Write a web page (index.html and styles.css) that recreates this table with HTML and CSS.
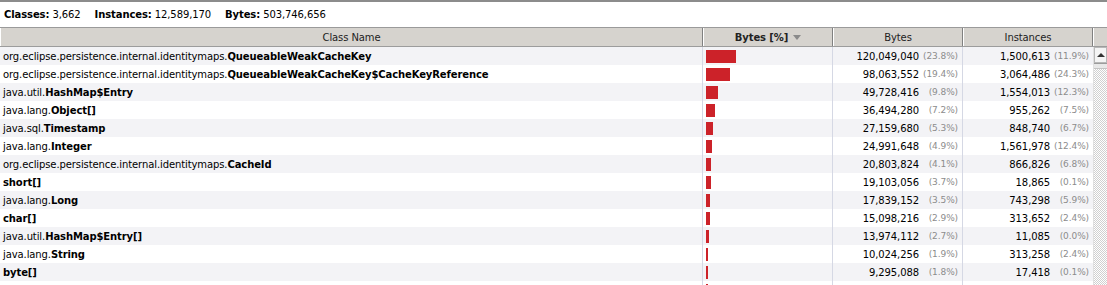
FILE: index.html
```html
<!DOCTYPE html>
<html>
<head>
<meta charset="utf-8">
<link rel="stylesheet" href="styles.css">
</head>
<body>
<div class="stats">
  <span class="stat"><b>Classes:</b> 3,662</span>
  <span class="stat"><b>Instances:</b> 12,589,170</span>
  <span class="stat"><b>Bytes:</b> 503,746,656</span>
</div>
<div class="table">
  <div class="header">
    <div class="hcell c-name">Class Name</div>
    <div class="hcell c-bar sorted"><b>Bytes [%]</b><span class="arrow"></span></div>
    <div class="hcell c-num">Bytes</div>
    <div class="hcell c-num">Instances</div>
    <div class="hcell c-corner"></div>
  </div>
  <div class="body">
    <div class="rows">
      <div class="row"><div class="cell c-name">org.eclipse.persistence.internal.identitymaps.<b>QueueableWeakCacheKey</b></div><div class="cell c-bar"><span class="bar" style="width:30px"></span></div><div class="cell c-num"><span class="n">120,049,040</span><span class="p">(23.8%)</span></div><div class="cell c-num"><span class="n">1,500,613</span><span class="p">(11.9%)</span></div></div>
      <div class="row"><div class="cell c-name">org.eclipse.persistence.internal.identitymaps.<b>QueueableWeakCacheKey$CacheKeyReference</b></div><div class="cell c-bar"><span class="bar" style="width:24px"></span></div><div class="cell c-num"><span class="n">98,063,552</span><span class="p">(19.4%)</span></div><div class="cell c-num"><span class="n">3,064,486</span><span class="p">(24.3%)</span></div></div>
      <div class="row"><div class="cell c-name">java.util.<b>HashMap$Entry</b></div><div class="cell c-bar"><span class="bar" style="width:12px"></span></div><div class="cell c-num"><span class="n">49,728,416</span><span class="p">(9.8%)</span></div><div class="cell c-num"><span class="n">1,554,013</span><span class="p">(12.3%)</span></div></div>
      <div class="row"><div class="cell c-name">java.lang.<b>Object[]</b></div><div class="cell c-bar"><span class="bar" style="width:9px"></span></div><div class="cell c-num"><span class="n">36,494,280</span><span class="p">(7.2%)</span></div><div class="cell c-num"><span class="n">955,262</span><span class="p">(7.5%)</span></div></div>
      <div class="row"><div class="cell c-name">java.sql.<b>Timestamp</b></div><div class="cell c-bar"><span class="bar" style="width:7px"></span></div><div class="cell c-num"><span class="n">27,159,680</span><span class="p">(5.3%)</span></div><div class="cell c-num"><span class="n">848,740</span><span class="p">(6.7%)</span></div></div>
      <div class="row"><div class="cell c-name">java.lang.<b>Integer</b></div><div class="cell c-bar"><span class="bar" style="width:6px"></span></div><div class="cell c-num"><span class="n">24,991,648</span><span class="p">(4.9%)</span></div><div class="cell c-num"><span class="n">1,561,978</span><span class="p">(12.4%)</span></div></div>
      <div class="row"><div class="cell c-name">org.eclipse.persistence.internal.identitymaps.<b>CacheId</b></div><div class="cell c-bar"><span class="bar" style="width:5px"></span></div><div class="cell c-num"><span class="n">20,803,824</span><span class="p">(4.1%)</span></div><div class="cell c-num"><span class="n">866,826</span><span class="p">(6.8%)</span></div></div>
      <div class="row"><div class="cell c-name"><b>short[]</b></div><div class="cell c-bar"><span class="bar" style="width:5px"></span></div><div class="cell c-num"><span class="n">19,103,056</span><span class="p">(3.7%)</span></div><div class="cell c-num"><span class="n">18,865</span><span class="p">(0.1%)</span></div></div>
      <div class="row"><div class="cell c-name">java.lang.<b>Long</b></div><div class="cell c-bar"><span class="bar" style="width:4px"></span></div><div class="cell c-num"><span class="n">17,839,152</span><span class="p">(3.5%)</span></div><div class="cell c-num"><span class="n">743,298</span><span class="p">(5.9%)</span></div></div>
      <div class="row"><div class="cell c-name"><b>char[]</b></div><div class="cell c-bar"><span class="bar" style="width:4px"></span></div><div class="cell c-num"><span class="n">15,098,216</span><span class="p">(2.9%)</span></div><div class="cell c-num"><span class="n">313,652</span><span class="p">(2.4%)</span></div></div>
      <div class="row"><div class="cell c-name">java.util.<b>HashMap$Entry[]</b></div><div class="cell c-bar"><span class="bar" style="width:3px"></span></div><div class="cell c-num"><span class="n">13,974,112</span><span class="p">(2.7%)</span></div><div class="cell c-num"><span class="n">11,085</span><span class="p">(0.0%)</span></div></div>
      <div class="row"><div class="cell c-name">java.lang.<b>String</b></div><div class="cell c-bar"><span class="bar" style="width:2px"></span></div><div class="cell c-num"><span class="n">10,024,256</span><span class="p">(1.9%)</span></div><div class="cell c-num"><span class="n">313,258</span><span class="p">(2.4%)</span></div></div>
      <div class="row"><div class="cell c-name"><b>byte[]</b></div><div class="cell c-bar"><span class="bar" style="width:2px"></span></div><div class="cell c-num"><span class="n">9,295,088</span><span class="p">(1.8%)</span></div><div class="cell c-num"><span class="n">17,418</span><span class="p">(0.1%)</span></div></div>
      <div class="row"><div class="cell c-name"></div><div class="cell c-bar"><span class="bar" style="width:2px"></span></div><div class="cell c-num"></div><div class="cell c-num"></div></div>
    </div>
    <div class="scrollbar">
      <div class="sb-btn"><span class="up"></span></div>
      <div class="sb-thumb"></div>
      <div class="sb-track"></div>
    </div>
  </div>
</div>
</body>
</html>
```

FILE: styles.css
```css
html, body {
  margin: 0;
  padding: 0;
  background: #ffffff;
  overflow: hidden;
}
body {
  font-family: "DejaVu Sans", Verdana, sans-serif;
  font-size: 10px;
  letter-spacing: -0.1px;
  color: #000;
  width: 1107px;
  height: 285px;
}
b { font-weight: bold; }

.stats {
  border-top: 2px solid #8c8c8c;
  display: flex;
  align-items: center;
  padding-left: 4px;
  gap: 14px;
  box-sizing: border-box;
  height: 27px;
  padding-bottom: 1px;
}

.table {
  border-top: 1px solid #9a9a9a;
}
.header {
  display: flex;
  background: #d6d3ce;
  border-bottom: 1px solid #9c9c9c;
  box-sizing: border-box;
  height: 19px;
}
.hcell {
  box-sizing: border-box;
  border-left: 1px solid #ffffff;
  border-right: 1px solid #808080;
  display: flex;
  align-items: center;
  justify-content: center;
  color: #222;
}
.hcell.c-corner { border-right: none; flex: 1; }
.hcell .arrow {
  width: 0; height: 0;
  border-left: 4px solid transparent;
  border-right: 4px solid transparent;
  border-top: 5px solid #8a8a8a;
  margin-left: 5px;
  margin-top: 1px;
}

.c-name { width: 703px; }
.c-bar { width: 130px; }
.c-num { width: 130px; }

.body {
  display: flex;
  height: 238px;
  overflow: hidden;
}
.rows { width: 1093px; }
.row {
  display: flex;
  height: 18px;
}
.row:nth-child(odd) { background: #f3f3f6; }
.cell {
  box-sizing: border-box;
  display: flex;
  align-items: center;
  white-space: nowrap;
  border-right: 1px solid #d5d8e4;
}
.cell.c-name { padding-left: 3px; }
.cell.c-bar { padding-left: 3px; }
.cell.c-num { justify-content: flex-end; padding-right: 4px; }
.row .cell:last-child { border-right: none; }
.bar {
  display: block;
  height: 13px;
  background: #cc2229;
}
.p {
  color: #8c8c8c;
  font-size: 9px;
  width: 39px;
  text-align: right;
}

.scrollbar {
  width: 14px;
  display: flex;
  flex-direction: column;
  border-left: 1px solid #e0e0e0;
}
.sb-btn {
  height: 16px;
  box-sizing: border-box;
  background: #f4f4f4;
  border: 1px solid #b8b8b8;
  display: flex;
  align-items: center;
  justify-content: center;
}
.sb-btn .up {
  width: 0; height: 0;
  border-left: 4px solid transparent;
  border-right: 4px solid transparent;
  border-bottom: 4px solid #333;
}
.sb-thumb {
  height: 4px;
  background: #e8e8e8;
  border-top: 1px solid #9c9c9c;
  border-bottom: 1px solid #c4c4c4;
}
.sb-track {
  flex: 1;
  background-color: #ffffff;
  background-image: repeating-conic-gradient(#d0d0d0 0 25%, #ffffff 0 50%);
  background-size: 2px 2px;
}
```
